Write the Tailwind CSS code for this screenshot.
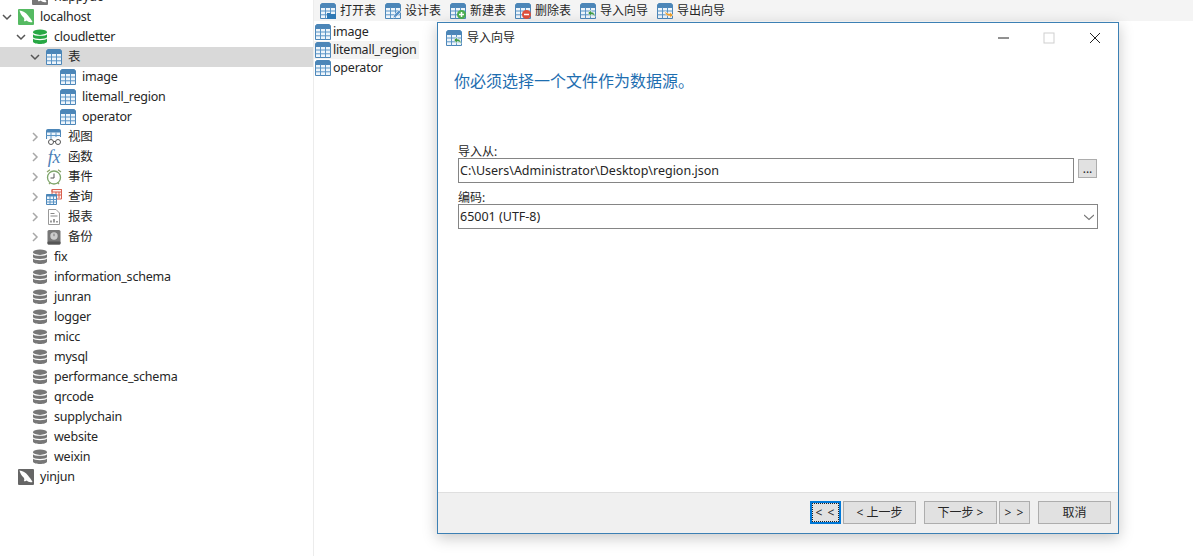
<!DOCTYPE html>
<html lang="zh"><head><meta charset="utf-8">
<script src="https://cdn.jsdelivr.net/npm/@tailwindcss/browser@4"></script>
</head>
<body class="bg-white">
<svg width="0" height="0" class="absolute">
<defs>
<symbol id="tb" viewBox="0 0 16 16"><path d="M.5 3Q.5.5 3 .5h10q2.500 0 2.500 2.500v12.500H.5z" fill="#eef5fb" stroke="#4c86b8"/><path d="M.5 4.500V3Q.5.500 3 .500h10q2.500 0 2.500 2.500v1.500z" fill="#4c86b8" stroke="#4c86b8"/><path d="M5.500 4.500v11M10.500 4.500v11M.5 8h15M.5 11.800h15" stroke="#5b95c6" fill="none"/></symbol>
<symbol id="db" viewBox="0 0 16 16"><ellipse cx="8" cy="3.200" rx="7" ry="2.700" fill="currentColor"/><path d="M1 5.300c1 2 13 2 14 0v3c-1 2.200-13 2.200-14 0z" fill="currentColor"/><path d="M1 9.600c1 2.100 13 2.100 14 0v3.200c-1 3-13 3-14 0z" fill="currentColor"/></symbol>
<symbol id="srv" viewBox="0 0 16 16"><rect width="16" height="16" rx="1" fill="currentColor"/><path d="M1.500 1.500c3 .3 6.500 2 8.500 5 1.300 2 3.500 4 4.500 6.500-2.500.5-4.500 0-5.700-1.500-.8.800-2 1-3 .5.800-1 .6-2.500-.2-3.500C3.500 6.500 2 4 1.500 1.500z" fill="#fff"/></symbol>
<symbol id="chd" viewBox="0 0 10 10"><path d="M1 3l4 4 4-4" fill="none" stroke="#555" stroke-width="1.500"/></symbol>
<symbol id="chr" viewBox="0 0 10 10"><path d="M3 1l4 4-4 4" fill="none" stroke="#a8a8a8" stroke-width="1.500"/></symbol>
</defs>
</svg>

<div class="relative flex h-[556px] w-[1193px] overflow-hidden text-[12.5px] leading-[20px] text-[#262626] font-['Noto_Sans','Noto_Sans_CJK_SC',sans-serif]">
  <!-- sidebar -->
  <aside class="w-[314px] shrink-0 border-r border-[#ececec] -mt-[13px] tracking-[-0.22px]">
    <div class="flex h-[20px] items-center pl-[14px]"><span class="w-[18px]"></span><svg class="w-4 h-4 text-[#777]"><use href="#srv"/></svg><span class="ml-[6px]">happyuo</span></div>
    <div class="flex h-[20px] items-center"><span class="w-[18px] flex items-center justify-start pl-[2px]"><svg class="w-[10px] h-[10px]"><use href="#chd"/></svg></span><svg class="w-4 h-4 text-[#55ba62]"><use href="#srv"/></svg><span class="ml-[6px]">localhost</span></div>
    <div class="flex h-[20px] items-center pl-[14px]"><span class="w-[18px] flex items-center pl-[2px]"><svg class="w-[10px] h-[10px]"><use href="#chd"/></svg></span><svg class="w-4 h-4 text-[#27a844]"><use href="#db"/></svg><span class="ml-[6px]">cloudletter</span></div>
    <div class="flex h-[20px] items-center pl-[28px] bg-[#d9d9d9]"><span class="w-[18px] flex items-center pl-[2px]"><svg class="w-[10px] h-[10px]"><use href="#chd"/></svg></span><svg class="w-4 h-4"><use href="#tb"/></svg><span class="ml-[6px]">表</span></div>
    <div class="flex h-[20px] items-center pl-[60px]"><svg class="w-4 h-4"><use href="#tb"/></svg><span class="ml-[6px]">image</span></div>
    <div class="flex h-[20px] items-center pl-[60px]"><svg class="w-4 h-4"><use href="#tb"/></svg><span class="ml-[6px]">litemall_region</span></div>
    <div class="flex h-[20px] items-center pl-[60px]"><svg class="w-4 h-4"><use href="#tb"/></svg><span class="ml-[6px]">operator</span></div>
    <div class="flex h-[20px] items-center pl-[28px]"><span class="w-[18px] flex items-center pl-[2px]"><svg class="w-[10px] h-[10px]"><use href="#chr"/></svg></span>
      <svg class="w-4 h-4" viewBox="0 0 16 16"><path d="M.5 10V1.500Q.5.500 1.500.500h12q1 0 1 1V8" fill="#eef5fb" stroke="#4c86b8"/><path d="M.5 3.500v-2q0-1 1-1h12q1 0 1 1v2z" fill="#4c86b8"/><path d="M5 3.500V10M10 3.500V8M.5 6.500h14" stroke="#5b95c6" fill="none"/><circle cx="5" cy="13" r="2.500" fill="#fff" stroke="#555"/><circle cx="12" cy="13" r="2.500" fill="#fff" stroke="#555"/><path d="M7.500 12.500h2" stroke="#555"/></svg>
      <span class="ml-[6px]">视图</span></div>
    <div class="flex h-[20px] items-center pl-[28px]"><span class="w-[18px] flex items-center pl-[2px]"><svg class="w-[10px] h-[10px]"><use href="#chr"/></svg></span><span class="w-4 h-4 flex items-center justify-center font-['Liberation_Serif',serif] italic text-[18px] text-[#4c7fb8]">fx</span><span class="ml-[6px]">函数</span></div>
    <div class="flex h-[20px] items-center pl-[28px]"><span class="w-[18px] flex items-center pl-[2px]"><svg class="w-[10px] h-[10px]"><use href="#chr"/></svg></span>
      <svg class="w-4 h-4" viewBox="0 0 16 16"><circle cx="8" cy="8.500" r="6.500" fill="#fff" stroke="#7da56a" stroke-width="1.300"/><path d="M8 4.500v4.500H4.500" fill="none" stroke="#555"/><path d="M1 3l3-2.200M15 3l-3-2.200M3 15l1.500-1.500M13 15l-1.500-1.500" stroke="#8aa56a" stroke-width="1.300"/></svg>
      <span class="ml-[6px]">事件</span></div>
    <div class="flex h-[20px] items-center pl-[28px]"><span class="w-[18px] flex items-center pl-[2px]"><svg class="w-[10px] h-[10px]"><use href="#chr"/></svg></span>
      <svg class="w-4 h-4" viewBox="0 0 16 16"><path d="M6 .5h9.500V10H6z" fill="#fdf0ee" stroke="#d9604f"/><path d="M6 .5h9.500v2.500H6zM10 3v6M13 3v6M6 6h9" fill="none" stroke="#d9604f"/><path d="M.5 5.500h10v10H.5z" fill="#eef5fb" stroke="#4c86b8"/><path d="M.5 5.500h10v2H.5z" fill="#4c86b8"/><path d="M4 7v8M7.500 7v8M.5 10.500h10M.5 13h10" stroke="#5b95c6" fill="none"/></svg>
      <span class="ml-[6px]">查询</span></div>
    <div class="flex h-[20px] items-center pl-[28px]"><span class="w-[18px] flex items-center pl-[2px]"><svg class="w-[10px] h-[10px]"><use href="#chr"/></svg></span>
      <svg class="w-4 h-4" viewBox="0 0 16 16"><path d="M2.500.5h7.500l3.500 3.500v11.500h-11z" fill="#fff" stroke="#999"/><path d="M4.500 4.500h4M4.500 7h7" stroke="#888"/><path d="M5 13.500v-2M8 13.500v-3.500M11 13.500v-1.500" stroke="#666" stroke-width="1.300"/></svg>
      <span class="ml-[6px]">报表</span></div>
    <div class="flex h-[20px] items-center pl-[28px]"><span class="w-[18px] flex items-center pl-[2px]"><svg class="w-[10px] h-[10px]"><use href="#chr"/></svg></span>
      <svg class="w-4 h-4" viewBox="0 0 16 16"><rect x="1.500" y="1" width="13" height="14.500" rx="1.500" fill="#777"/><rect x="1.500" y="12.500" width="13" height="3" rx="1" fill="#555"/><circle cx="8" cy="7" r="3.700" fill="#ccc"/><path d="M8 4.700v2.500" stroke="#777"/></svg>
      <span class="ml-[6px]">备份</span></div>
    <div class="flex h-[20px] items-center pl-[14px]"><span class="w-[18px]"></span><svg class="w-4 h-4 text-[#777]"><use href="#db"/></svg><span class="ml-[6px]">fix</span></div>
    <div class="flex h-[20px] items-center pl-[14px]"><span class="w-[18px]"></span><svg class="w-4 h-4 text-[#777]"><use href="#db"/></svg><span class="ml-[6px]">information_schema</span></div>
    <div class="flex h-[20px] items-center pl-[14px]"><span class="w-[18px]"></span><svg class="w-4 h-4 text-[#777]"><use href="#db"/></svg><span class="ml-[6px]">junran</span></div>
    <div class="flex h-[20px] items-center pl-[14px]"><span class="w-[18px]"></span><svg class="w-4 h-4 text-[#777]"><use href="#db"/></svg><span class="ml-[6px]">logger</span></div>
    <div class="flex h-[20px] items-center pl-[14px]"><span class="w-[18px]"></span><svg class="w-4 h-4 text-[#777]"><use href="#db"/></svg><span class="ml-[6px]">micc</span></div>
    <div class="flex h-[20px] items-center pl-[14px]"><span class="w-[18px]"></span><svg class="w-4 h-4 text-[#777]"><use href="#db"/></svg><span class="ml-[6px]">mysql</span></div>
    <div class="flex h-[20px] items-center pl-[14px]"><span class="w-[18px]"></span><svg class="w-4 h-4 text-[#777]"><use href="#db"/></svg><span class="ml-[6px]">performance_schema</span></div>
    <div class="flex h-[20px] items-center pl-[14px]"><span class="w-[18px]"></span><svg class="w-4 h-4 text-[#777]"><use href="#db"/></svg><span class="ml-[6px]">qrcode</span></div>
    <div class="flex h-[20px] items-center pl-[14px]"><span class="w-[18px]"></span><svg class="w-4 h-4 text-[#777]"><use href="#db"/></svg><span class="ml-[6px]">supplychain</span></div>
    <div class="flex h-[20px] items-center pl-[14px]"><span class="w-[18px]"></span><svg class="w-4 h-4 text-[#777]"><use href="#db"/></svg><span class="ml-[6px]">website</span></div>
    <div class="flex h-[20px] items-center pl-[14px]"><span class="w-[18px]"></span><svg class="w-4 h-4 text-[#777]"><use href="#db"/></svg><span class="ml-[6px]">weixin</span></div>
    <div class="flex h-[20px] items-center"><span class="w-[18px]"></span><svg class="w-4 h-4 text-[#666]"><use href="#srv"/></svg><span class="ml-[6px]">yinjun</span></div>
  </aside>

  <!-- main -->
  <main class="flex-1 min-w-0">
    <div class="flex h-[21px] items-center gap-[9px] pl-[6px] bg-[#f4f4f4] text-[12px]">
      <div class="flex items-center gap-1"><svg class="w-4 h-4" viewBox="0 0 16 16"><use href="#tb"/><path d="M7 10h3l1 1h5v5H7z" fill="#2f79b5"/></svg><span>打开表</span></div>
      <div class="flex items-center gap-1"><svg class="w-4 h-4" viewBox="0 0 16 16"><use href="#tb"/><path d="M8 15l1-3 5-5 2 2-5 5z" fill="#5c93c7" stroke="#fff" stroke-width=".5"/></svg><span>设计表</span></div>
      <div class="flex items-center gap-1"><svg class="w-4 h-4" viewBox="0 0 16 16"><use href="#tb"/><circle cx="11.500" cy="11.500" r="4.500" fill="#4caf50"/><path d="M9 11.500h5M11.500 9v5" stroke="#fff" stroke-width="1.500"/></svg><span>新建表</span></div>
      <div class="flex items-center gap-1"><svg class="w-4 h-4" viewBox="0 0 16 16"><use href="#tb"/><circle cx="11.500" cy="11.500" r="4.500" fill="#e0503c"/><path d="M9 11.500h5" stroke="#fff" stroke-width="1.500"/></svg><span>删除表</span></div>
      <div class="flex items-center gap-1"><svg class="w-4 h-4" viewBox="0 0 16 16"><use href="#tb"/><path d="M8 10l3-3v2c3 0 4 2 4 5-1-2-2-2.500-4-2.500v2z" fill="#3f9a45" stroke="#fff" stroke-width=".5"/></svg><span>导入向导</span></div>
      <div class="flex items-center gap-1"><svg class="w-4 h-4" viewBox="0 0 16 16"><use href="#tb"/><path d="M16 12l-3 3v-2c-3 0-5-1-5-5 1 2 3 2.500 5 2.500V9z" fill="#eda02f" stroke="#fff" stroke-width=".5"/></svg><span>导出向导</span></div>
    </div>
    <div class="pt-[2px] tracking-[-0.22px]">
      <div class="flex h-[18px] w-[105px] items-center"><svg class="w-4 h-4 shrink-0 ml-[1px]"><use href="#tb"/></svg><span class="ml-[2px]">image</span></div>
      <div class="flex h-[18px] w-[105px] items-center bg-[#f3f3f3]"><svg class="w-4 h-4 shrink-0 ml-[1px]"><use href="#tb"/></svg><span class="ml-[2px]">litemall_region</span></div>
      <div class="flex h-[18px] w-[105px] items-center"><svg class="w-4 h-4 shrink-0 ml-[1px]"><use href="#tb"/></svg><span class="ml-[2px]">operator</span></div>
    </div>
  </main>

  <!-- dialog window -->
  <section class="absolute left-[437px] top-[22px] flex h-[512px] w-[682px] flex-col border border-[#3c80b4] bg-white shadow-[0_4px_14px_rgba(0,0,0,0.22)] text-[12px] leading-[16px]">
    <header class="flex h-[29px] shrink-0 items-center pl-[8px]">
      <svg class="w-4 h-4" viewBox="0 0 16 16"><use href="#tb"/><path d="M8 10l3-3v2c3 0 4 2 4 5-1-2-2-2.500-4-2.500v2z" fill="#3f9a45" stroke="#fff" stroke-width=".5"/></svg>
      <span class="ml-[5px]">导入向导</span>
      <div class="ml-auto flex items-center">
        <svg class="w-[46px] h-[14px]" viewBox="0 0 46 14"><path d="M18 7h11" stroke="#222"/></svg>
        <svg class="w-[46px] h-[14px]" viewBox="0 0 46 14"><rect x="18" y="2" width="10" height="10" fill="none" stroke="#cfcfcf"/></svg>
        <svg class="w-[46px] h-[14px]" viewBox="0 0 46 14"><path d="M18 2l10 10M28 2L18 12" stroke="#222"/></svg>
      </div>
    </header>
    <div class="flex-1 px-[16px]">
      <h1 class="mt-[18px] text-[16px] leading-[22px] font-normal text-[#1e6eb0]">你必须选择一个文件作为数据源。</h1>
      <div class="mt-[50px] pl-[4px] pr-[4px]">
        <label class="block h-[16px] leading-[20px]">导入从:</label>
        <div class="flex items-start gap-[4px]">
          <div class="flex h-[25px] w-[616px] items-center border border-[#858585] px-[1px] text-[12.5px]">C:\Users\Administrator\Desktop\region.json</div>
          <button class="mt-px flex h-[19px] w-[19px] items-center justify-center border border-[#adadad] bg-[#e1e1e1] leading-[12px]">...</button>
        </div>
        <label class="mt-[5px] block h-[16px] leading-[20px]">编码:</label>
        <div class="flex h-[25px] w-[640px] items-center justify-between border border-[#858585] pl-[1px] pr-[3px] text-[12.5px]">
          <span>65001 (UTF-8)</span>
          <svg class="w-[10px] h-[10px]" viewBox="0 0 10 10"><path d="M0 3l5 4.500L10 3" fill="none" stroke="#777" stroke-width="1.100"/></svg>
        </div>
      </div>
    </div>
    <footer class="flex h-[41px] shrink-0 items-start justify-end border-t border-[#dfdfdf] bg-[#f0f0f0] pt-[8px] pr-[7px]">
      <button class="flex h-[23px] w-[31px] items-center justify-center border-2 border-[#0078d7] bg-[#e1e1e1] outline-1 -outline-offset-3 outline-dotted outline-[#222] tracking-[1px]">&lt; &lt;</button>
      <button class="ml-[2px] h-[23px] w-[73px] border border-[#adadad] bg-[#e1e1e1]">&lt; 上一步</button>
      <button class="ml-[8px] h-[23px] w-[73px] border border-[#adadad] bg-[#e1e1e1]">下一步 &gt;</button>
      <button class="ml-[2px] h-[23px] w-[31px] border border-[#adadad] bg-[#e1e1e1] tracking-[1px]">&gt; &gt;</button>
      <button class="ml-[8px] h-[23px] w-[73px] border border-[#adadad] bg-[#e1e1e1]">取消</button>
    </footer>
  </section>
</div>
</body></html>
